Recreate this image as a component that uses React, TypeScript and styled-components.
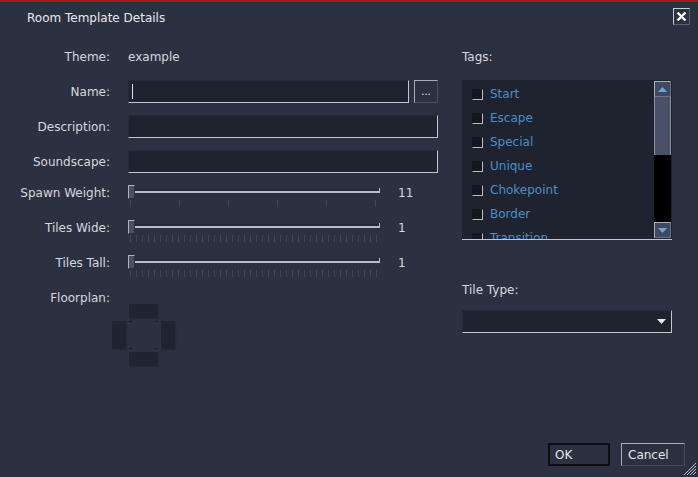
import React from 'react'
import styled, { createGlobalStyle } from 'styled-components'

const GlobalStyle = createGlobalStyle`
  html, body {
    margin: 0;
    padding: 0;
    background: #2c3142;
  }
  body {
    font-family: 'DejaVu Sans', 'Liberation Sans', sans-serif;
    font-size: 12px;
    color: #d6d8dc;
  }
`

const Window = styled.div`
  position: relative;
  width: 698px;
  height: 477px;
  box-sizing: border-box;
  background: #2c3142;
  border-top: 2px solid #a11d25;
  display: flex;
  flex-direction: column;
  overflow: hidden;
`

const Header = styled.div`
  height: 33px;
  display: flex;
  justify-content: space-between;
  align-items: flex-start;
  padding: 0 8px 0 27px;
`

const Title = styled.div`
  line-height: 14px;
  margin-top: 9px;
  color: #e8e9ec;
`

const CloseButton = styled.div`
  width: 15px;
  height: 15px;
  margin-top: 6px;
  border: 1px solid;
  border-color: #c9ccd2 #5a5f6c #5a5f6c #c9ccd2;
  display: flex;
  align-items: center;
  justify-content: center;
`

const Body = styled.div`
  flex: 1;
  display: flex;
  gap: 24px;
  padding-top: 10px;
`

const Form = styled.div`
  width: 438px;
`

const FormGrid = styled.div`
  display: grid;
  grid-template-columns: 110px 310px;
  grid-template-rows: repeat(7, 23px) 14px;
  column-gap: 18px;
  row-gap: 12px;
`

const Label = styled.div<{ $top?: boolean }>`
  text-align: right;
  align-self: ${(p) => (p.$top ? 'start' : 'center')};
  line-height: 14px;
  padding-top: 1px;
  color: #d6d8dc;
`

const Value = styled.div`
  align-self: center;
  line-height: 14px;
  padding-top: 1px;
  color: #d6d8dc;
`

const Field = styled.div<{ $width?: number }>`
  position: relative;
  box-sizing: border-box;
  height: 23px;
  width: ${(p) => (p.$width ? `${p.$width}px` : '100%')};
  background: #1f2330;
  border: 1px solid;
  border-color: #262a38 #c3c6cc #c3c6cc #262a38;
`

const Caret = styled.span`
  position: absolute;
  left: 3px;
  top: 3px;
  width: 1px;
  height: 15px;
  background: #e0e2e6;
`

const InlineRow = styled.div`
  display: flex;
  gap: 5px;
`

const SmallButton = styled.div`
  box-sizing: border-box;
  width: 24px;
  height: 23px;
  border: 1px solid;
  border-color: #a9adb6 #4a4f5c #4a4f5c #a9adb6;
  display: flex;
  align-items: flex-end;
  justify-content: center;
  padding-bottom: 5px;
  font-size: 10px;
  line-height: 10px;
  color: #e0e2e6;
`

const SliderRow = styled.div`
  display: flex;
  align-items: flex-start;
  gap: 18px;
`

const Slider = styled.div<{ $step: number }>`
  position: relative;
  width: 252px;
  height: 23px;
  &::before {
    content: '';
    position: absolute;
    left: 7px;
    right: 0;
    top: 4px;
    height: 2px;
    background: #262a3a;
  }
  &::after {
    content: '';
    position: absolute;
    left: 2px;
    right: 1px;
    top: 15px;
    height: 7px;
    background: repeating-linear-gradient(
      to right,
      #3f4558 0,
      #3f4558 1px,
      transparent 1px,
      transparent ${(p) => p.$step}px
    );
  }
`

const Track = styled.div`
  position: absolute;
  left: 7px;
  right: 0;
  top: 6px;
  height: 2px;
  background: #b9bdc6;
  &::after {
    content: '';
    position: absolute;
    right: 0;
    top: -3px;
    width: 1px;
    height: 4px;
    background: #b9bdc6;
  }
`

const Thumb = styled.div`
  position: absolute;
  left: 0;
  top: 0;
  box-sizing: border-box;
  width: 7px;
  height: 14px;
  background: #4b5162;
  border: 1px solid;
  border-color: #aeb2bb #2a2e3a #2a2e3a #aeb2bb;
  z-index: 1;
`

const SliderValue = styled.div`
  line-height: 14px;
  padding-top: 1px;
  color: #d6d8dc;
`

const Floorplan = styled.div`
  display: grid;
  grid-template-columns: 14px 29px 14px;
  grid-template-rows: 14px 28px 14px;
  gap: 3px;
  margin-left: 112px;
`

const Door = styled.div<{ $col: number; $row: number }>`
  grid-column: ${(p) => p.$col};
  grid-row: ${(p) => p.$row};
  background: #20242f;
  box-shadow: 1px 1px 1px #252a36;
`

const Center = styled.div`
  grid-column: 2;
  grid-row: 2;
  position: relative;
  background: #2c3142;
  background-image:
    linear-gradient(#181b24, #181b24), linear-gradient(#181b24, #181b24),
    linear-gradient(#181b24, #181b24), linear-gradient(#181b24, #181b24);
  background-size: 3px 1px;
  background-repeat: no-repeat;
  background-position: 0 0, 100% 0, 0 100%, 100% 100%;
`

const Side = styled.div`
  width: 210px;
  display: flex;
  flex-direction: column;
`

const SideLabel = styled.div<{ $gap?: number }>`
  height: 23px;
  line-height: 25px;
  margin-top: ${(p) => p.$gap ?? 0}px;
  color: #d6d8dc;
`

const TagList = styled.div`
  position: relative;
  margin-top: 12px;
  height: 160px;
  box-sizing: border-box;
  background: #1f2330;
  border-bottom: 1px solid #c3c6cc;
  overflow: hidden;
`

const TagItems = styled.div`
  padding: 2px 0 0 10px;
`

const TagItem = styled.div`
  height: 24px;
  display: flex;
  align-items: center;
  gap: 7px;
`

const Check = styled.span`
  box-sizing: border-box;
  width: 11px;
  height: 11px;
  background: #15171f;
  border: 1px solid;
  border-color: #15171f #b8bcc4 #b8bcc4 #15171f;
`

const TagText = styled.span`
  color: #4b8fc8;
  line-height: 14px;
`

const ScrollBar = styled.div`
  position: absolute;
  right: 1px;
  top: 1px;
  bottom: 1px;
  width: 17px;
  display: flex;
  flex-direction: column;
  background: #000;
`

const ScrollButton = styled.div`
  box-sizing: border-box;
  height: 16px;
  background: #3f4a62;
  border: 1px solid;
  border-color: #a9adb6 #6d7384 #6d7384 #a9adb6;
  display: flex;
  align-items: center;
  justify-content: center;
`

const ScrollThumb = styled.div`
  box-sizing: border-box;
  height: 58px;
  background: #485168;
  border-left: 1px solid #8a90a0;
  border-right: 1px solid #8a90a0;
`

const ScrollTrack = styled.div`
  flex: 1;
  background: #000;
`

const Select = styled.div`
  margin-top: 9px;
  box-sizing: border-box;
  height: 23px;
  background: #1f2330;
  border: 1px solid;
  border-color: #262a38 #c3c6cc #c3c6cc #262a38;
  display: flex;
  align-items: center;
  justify-content: flex-end;
  padding-right: 5px;
`

const Footer = styled.div`
  display: flex;
  justify-content: flex-end;
  gap: 11px;
  padding: 0 13px 11px 0;
`

const DialogButton = styled.div<{ $primary?: boolean; $width: number }>`
  box-sizing: border-box;
  width: ${(p) => p.$width}px;
  height: 23px;
  padding-left: 5px;
  line-height: 21px;
  color: #e6e7ea;
  border: ${(p) => (p.$primary ? '2px solid #0c0e13' : '1px solid')};
  border-color: ${(p) =>
    p.$primary ? '#0c0e13' : '#a9adb6 #454a58 #454a58 #a9adb6'};
  ${(p) => (p.$primary ? '' : 'padding-top: 1px; padding-left: 6px;')}
`

const Grip = styled.svg`
  position: absolute;
  right: 1px;
  bottom: 1px;
`

const tags = ['Start', 'Escape', 'Special', 'Unique', 'Chokepoint', 'Border', 'Transition']

const Triangle = ({ down }: { down?: boolean }) => (
  <svg width="9" height="5" viewBox="0 0 9 5">
    <path d={down ? 'M0 0h9L4.5 5z' : 'M0 5h9L4.5 0z'} fill="#6ea6da" />
  </svg>
)

const SliderField = ({ step, value }: { step: number; value: string }) => (
  <SliderRow>
    <Slider $step={step}>
      <Thumb />
      <Track />
    </Slider>
    <SliderValue>{value}</SliderValue>
  </SliderRow>
)

export default function App() {
  return (
    <>
      <GlobalStyle />
      <Window>
        <Header>
          <Title>Room Template Details</Title>
          <CloseButton>
            <svg width="11" height="11" viewBox="0 0 11 11">
              <path d="M1.5 1.5l8 8M9.5 1.5l-8 8" stroke="#fff" strokeWidth="2.4" />
            </svg>
          </CloseButton>
        </Header>
        <Body>
          <Form>
            <FormGrid>
              <Label>Theme:</Label>
              <Value>example</Value>

              <Label>Name:</Label>
              <InlineRow>
                <Field $width={281}>
                  <Caret />
                </Field>
                <SmallButton>...</SmallButton>
              </InlineRow>

              <Label>Description:</Label>
              <Field />

              <Label>Soundscape:</Label>
              <Field />

              <Label $top>Spawn Weight:</Label>
              <SliderField step={49} value="11" />

              <Label $top>Tiles Wide:</Label>
              <SliderField step={6} value="1" />

              <Label $top>Tiles Tall:</Label>
              <SliderField step={6} value="1" />

              <Label $top>Floorplan:</Label>
              <div />
            </FormGrid>
            <Floorplan>
              <Door $col={2} $row={1} />
              <Door $col={1} $row={2} />
              <Center />
              <Door $col={3} $row={2} />
              <Door $col={2} $row={3} />
            </Floorplan>
          </Form>
          <Side>
            <SideLabel>Tags:</SideLabel>
            <TagList>
              <TagItems>
                {tags.map((t) => (
                  <TagItem key={t}>
                    <Check />
                    <TagText>{t}</TagText>
                  </TagItem>
                ))}
              </TagItems>
              <ScrollBar>
                <ScrollButton>
                  <Triangle />
                </ScrollButton>
                <ScrollThumb />
                <ScrollTrack />
                <ScrollButton>
                  <Triangle down />
                </ScrollButton>
              </ScrollBar>
            </TagList>
            <SideLabel $gap={38}>Tile Type:</SideLabel>
            <Select>
              <svg width="9" height="5" viewBox="0 0 9 5">
                <path d="M0 0h9L4.5 5z" fill="#e8e9ec" />
              </svg>
            </Select>
          </Side>
        </Body>
        <Footer>
          <DialogButton $primary $width={62}>OK</DialogButton>
          <DialogButton $width={64}>Cancel</DialogButton>
        </Footer>
        <Grip width="13" height="13" viewBox="0 0 13 13">
          <path d="M12 3L3 12M12 6L6 12M12 9L9 12M12 0L0 12" stroke="#b9bdc6" strokeWidth="1" />
        </Grip>
      </Window>
    </>
  )
}
